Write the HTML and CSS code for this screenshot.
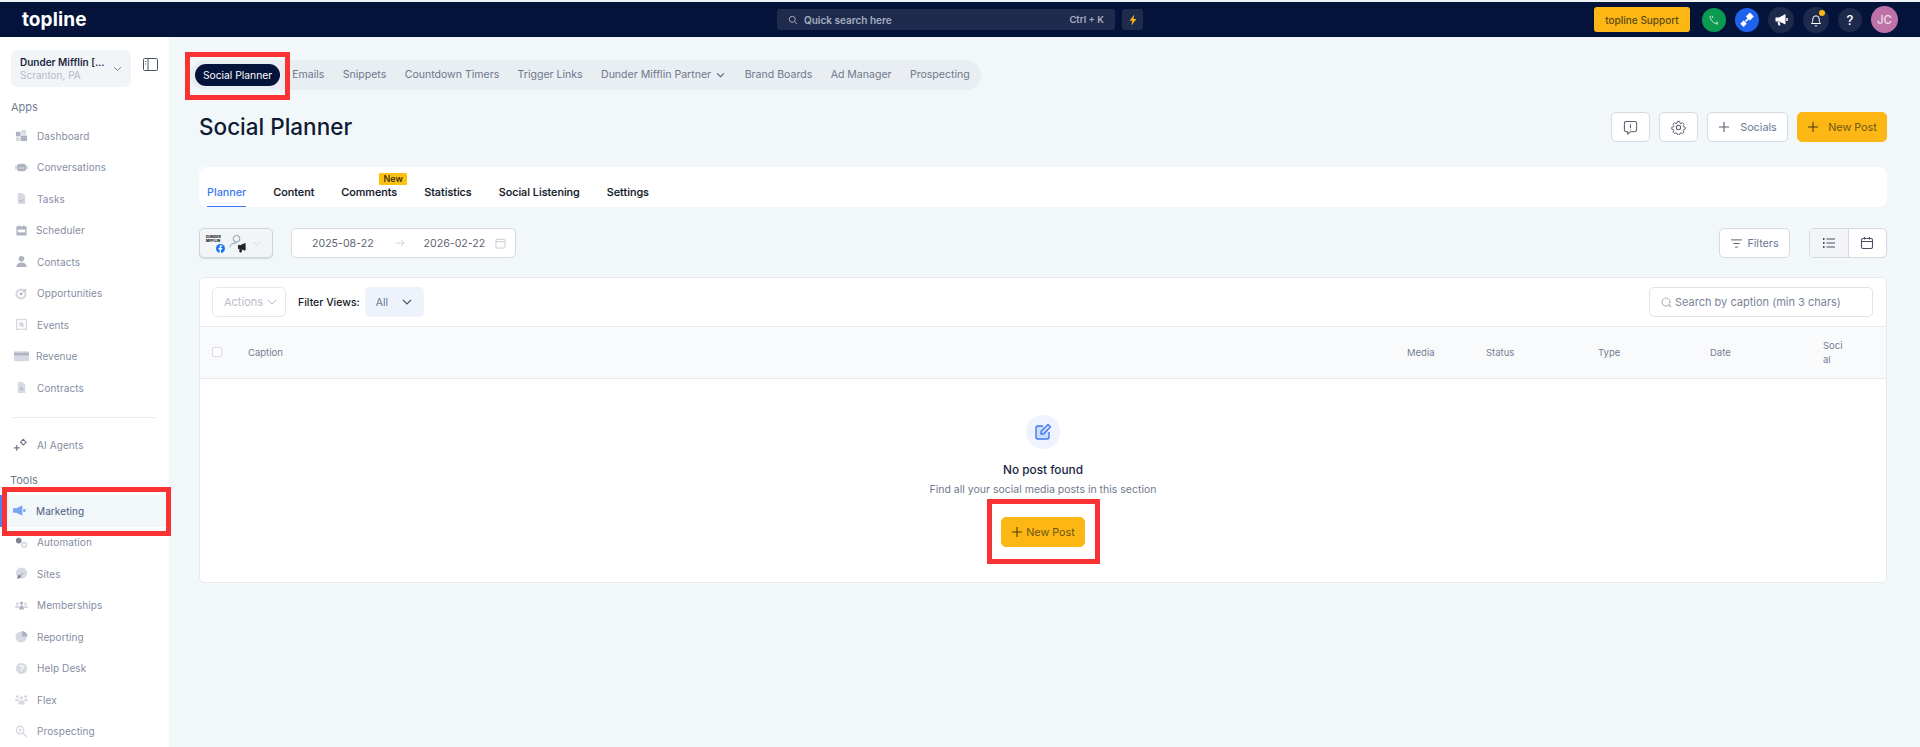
FILE: index.html
```html
<!DOCTYPE html>
<html lang="en">
<head>
<meta charset="utf-8">
<title>Social Planner</title>
<link rel="stylesheet" href="styles.css">
</head>
<body>
<div class="topstrip"></div>
<header class="topbar">
  <div class="logo">topline</div>
  <div class="top-center">
    <div class="quick">
      <svg class="qi" viewBox="0 0 14 14"><circle cx="6" cy="6" r="4.2"/><path d="M9.2 9.2 12.5 12.5"/></svg>
      <span class="quick-text">Quick search here</span>
      <span class="quick-key">Ctrl + K</span>
    </div>
    <div class="bolt"><svg viewBox="0 0 12 14"><path d="M7.5 0.5 2 8h3.2L4 13.5 10 5.8H6.6z"/></svg></div>
  </div>
  <div class="top-right">
    <button class="support">topline Support</button>
    <span class="circle green"><svg viewBox="0 0 14 14"><path d="M3 3c0 4 4 8 8 8" /><path d="M5 2.8 6 5M9 9l2.2 1"/></svg></span>
    <span class="circle blue"><svg viewBox="0 0 14 14"><path class="fillw" d="M9.5 .5 13 4 9.500 7.500 6 4z"/><path class="fillw" d="M4 7.500 6.800 10.300 4 13.100 1.200 10.300z"/><path d="M5.500 8.500 8.500 5.500" stroke-width="1.500"/></svg></span>
    <span class="circle navy big"><svg viewBox="0 0 14 14"><path class="fillw" d="M1.500 4.500h3.500l6.500-3.500v10.500L5 8.500H1.500z"/><path class="fillw" d="M3.500 9h2.200l.7 3.500H4.500z"/><rect class="fillw" x="12.300" y="5" width="1.500" height="3"/></svg></span>
    <span class="circle navy big bell"><svg viewBox="0 0 14 14"><path d="M2.500 10.500c1-1 1.300-2.200 1.300-4.500a3.200 3.200 0 0 1 6.400 0c0 2.300.3 3.500 1.300 4.500z"/><path d="M5.800 12.800h2.400"/></svg><i class="dot"></i></span>
    <span class="circle navy help">?</span>
    <span class="avatar">JC</span>
  </div>
</header>

<div class="shell">
  <aside class="sidebar">
    <div class="loc-row">
      <div class="loc">
        <div class="loc-text">
          <div class="loc-name">Dunder Mifflin [...</div>
          <div class="loc-sub">Scranton, PA</div>
        </div>
        <svg class="chev" viewBox="0 0 12 8"><path d="M1.500 1.500 6 6l4.500-4.500"/></svg>
      </div>
      <svg class="panel-ico" viewBox="0 0 15 13"><rect x="0.5" y="0.5" width="14" height="12" rx="1"/><path d="M5 .5v12M2.500 3v1M2.500 5.500v1"/></svg>
    </div>
    <div class="sec">Apps</div>
    <a class="item"><svg viewBox="0 0 14 14"><rect x="1" y="3" width="5" height="5"/><rect class="lt" x="7" y="1" width="5" height="5"/><rect class="lt" x="1" y="9" width="4" height="4"/><rect x="6" y="7" width="7" height="6"/></svg><span>Dashboard</span></a>
    <a class="item"><svg viewBox="0 0 14 14"><rect x="2" y="3" width="10" height="8" rx="3"/><rect class="lt" x="0" y="5" width="2" height="4"/><rect class="lt" x="12" y="5" width="2" height="4"/><path class="whl" d="M4.500 7.500h1M6.500 7.500h1M8.500 7.500h1"/></svg><span>Conversations</span></a>
    <a class="item"><svg viewBox="0 0 14 14"><path class="lt" d="M3 1h5l3 3v9H3z"/><path class="ln" d="M5 9l1.500 1.500L9 8"/></svg><span>Tasks</span></a>
    <a class="item tight"><svg viewBox="0 0 14 14"><rect x="1.500" y="2.500" width="11" height="10" rx="1"/><rect class="wh" x="3" y="6" width="8" height="3"/><rect x="4" y="1" width="1" height="2"/><rect x="9" y="1" width="1" height="2"/></svg><span>Scheduler</span></a>
    <a class="item"><svg viewBox="0 0 14 14"><circle cx="7" cy="4" r="3"/><path d="M1.500 13c0-3 2-5 5.500-5s5.500 2 5.500 5z"/></svg><span>Contacts</span></a>
    <a class="item"><svg viewBox="0 0 14 14"><circle class="lt" cx="6.500" cy="7.500" r="6"/><circle class="wh" cx="6.500" cy="7.500" r="3.500"/><circle cx="6.500" cy="7.500" r="1.500"/><path d="M7 7 11 2l1.500 1z"/></svg><span>Opportunities</span></a>
    <a class="item"><svg viewBox="0 0 14 14"><rect class="lt" x="1" y="1" width="12" height="12"/><rect class="wh" x="2.500" y="2.500" width="9" height="9"/><rect class="lt" x="4.500" y="4.500" width="4" height="4"/><rect class="lt" x="6" y="6" width="3.500" height="3.500"/></svg><span>Events</span></a>
    <a class="item tight wide"><svg viewBox="0 0 14 10"><rect x="0" y="0" width="14" height="9.500" rx="1" class="lt"/><rect x="0" y="1.500" width="14" height="2.500"/></svg><span>Revenue</span></a>
    <a class="item"><svg viewBox="0 0 14 14"><path class="lt" d="M3 1h5l3 3v9H3z"/><path class="ln" d="M5 10c1-1 2-2 2-3 0 1 1 3 2 3"/></svg><span>Contracts</span></a>
    <div class="divider"></div>
    <a class="item ai"><svg viewBox="0 0 16 14"><path class="dk" d="M4 7v6M1 10h6"/><path class="dk" d="M11 1l3 3-3 3-3-3z" fill="none"/></svg><span>AI Agents</span></a>
    <div class="sec tools">Tools</div>
    <a class="item active"><svg viewBox="0 0 14 14"><path d="M0 4.500h3.500L10 1.500v11L3.500 9.500H0z"/><rect x="11" y="5.500" width="2.500" height="3"/></svg><span>Marketing</span></a>
    <a class="item"><svg viewBox="0 0 14 14"><circle class="dkf" cx="4" cy="5" r="3"/><circle class="lt" cx="10" cy="9.500" r="3.500"/><circle class="wh" cx="10" cy="9.500" r="1.500"/></svg><span>Automation</span></a>
    <a class="item"><svg viewBox="0 0 14 14"><circle class="lt" cx="7" cy="6.500" r="6"/><path class="dkf" d="M2 13l2-5 3 3zM5 9.500 8 6.500l.5.5-3 3z"/></svg><span>Sites</span></a>
    <a class="item"><svg viewBox="0 0 16 14"><circle class="lt" cx="3" cy="5" r="1.800"/><circle cx="8" cy="4" r="2"/><circle class="lt" cx="13" cy="5" r="1.800"/><path class="lt" d="M0 10c0-2 1-3 3-3s2 1 2 3z"/><path d="M5 12c0-3 1-5 3-5s3 2 3 5z"/><path class="lt" d="M11 10c0-2 1-3 2-3s3 1 3 3z"/></svg><span>Memberships</span></a>
    <a class="item"><svg viewBox="0 0 14 14"><circle class="lt" cx="6.500" cy="7.500" r="6"/><path d="M7.500 1a6 6 0 0 1 6 6h-6z"/></svg><span>Reporting</span></a>
    <a class="item"><svg viewBox="0 0 14 14"><circle class="lt" cx="7" cy="7" r="6"/><path class="whl" d="M5.200 5.500a1.800 1.800 0 1 1 2.700 1.600c-.6.4-.9.700-.9 1.400M7 10v.8"/></svg><span>Help Desk</span></a>
    <a class="item"><svg viewBox="0 0 16 14"><circle class="lt" cx="3" cy="3.500" r="1.800"/><circle class="lt" cx="8" cy="5" r="2"/><circle class="lt" cx="13" cy="3.500" r="1.800"/><path class="lt" d="M0 9c0-2 1-3 3-3s2 1 2 3zM11 9c0-2 1-3 2-3s3 1 3 3zM4 13c0-3 1-5 4-5s4 2 4 5z"/></svg><span>Flex</span></a>
    <a class="item"><svg viewBox="0 0 14 14"><circle class="ol" cx="5.500" cy="5.500" r="4"/><circle class="lt" cx="5.500" cy="5.500" r="1.500"/><path class="ol" d="M8.500 8.500 13 13"/></svg><span>Prospecting</span></a>
  </aside>

  <main class="main">
    <nav class="pills">
      <a class="pill on">Social Planner</a>
      <a class="pill">Emails</a>
      <a class="pill">Snippets</a>
      <a class="pill">Countdown Timers</a>
      <a class="pill">Trigger Links</a>
      <a class="pill dd">Dunder Mifflin Partner <svg class="pill-chev" viewBox="0 0 10 7"><path d="M1 1.500 5 5.500l4-4"/></svg></a>
      <a class="pill">Brand Boards</a>
      <a class="pill">Ad Manager</a>
      <a class="pill">Prospecting</a>
    </nav>

    <div class="title-row">
      <h1>Social Planner</h1>
      <div class="actions">
        <button class="btn square"><svg viewBox="0 0 16 16"><path d="M3.500 1.500h9a2 2 0 0 1 2 2v7a2 2 0 0 1-2 2H8l-3 2.500v-2.500H3.500a2 2 0 0 1-2-2v-7a2 2 0 0 1 2-2z"/><path d="M8 4.500v4M8 10v.8"/></svg></button>
        <button class="btn square"><svg viewBox="0 0 16 16"><circle cx="8" cy="8" r="2.300"/><path d="M6.700 1h2.600l.4 2 1.300.6 1.800-1.100 1.800 1.900-1.100 1.700.5 1.300 2 .4v2.400l-2 .4-.5 1.300 1.100 1.700-1.800 1.900-1.800-1.100-1.300.6-.4 2H6.700l-.4-2-1.300-.6-1.800 1.100-1.800-1.900 1.100-1.700-.5-1.300-2-.4V7.800l2-.4.5-1.300-1.100-1.700 1.800-1.900 1.800 1.100 1.300-.6z" transform="translate(.8 .6) scale(.9)"/></svg></button>
        <button class="btn socials"><svg viewBox="0 0 12 12"><path d="M6 1v10M1 6h10"/></svg><span>Socials</span></button>
        <button class="btn primary"><svg viewBox="0 0 12 12"><path d="M6 1v10M1 6h10"/></svg><span>New Post</span></button>
      </div>
    </div>

    <div class="tabs">
      <a class="tab on">Planner</a>
      <a class="tab">Content</a>
      <a class="tab">Comments<em class="badge">New</em></a>
      <a class="tab">Statistics</a>
      <a class="tab">Social Listening</a>
      <a class="tab">Settings</a>
    </div>

    <div class="filter-row">
      <div class="acct">
        <span class="acct-logo"><b class="mini">DUNDER MIFFLIN</b><svg class="fb" viewBox="0 0 10 10"><circle cx="5" cy="5" r="5"/><path d="M5.500 10V6h1.300l.2-1.500H5.500v-1c0-.5.200-.8.800-.8H7V1.400C6.700 1.300 6.300 1.300 6 1.300 4.800 1.300 4 2 4 3.300v1.200H2.800V6H4v4z"/></svg></span>
        <svg class="acct-user" viewBox="0 0 20 20"><circle cx="9" cy="5" r="3.500"/><path d="M2 14c0-3 3-4.500 7-4.500"/><path class="blk" d="M11 12h2.500L18 10v7l-4.500-1.500H11zM12.500 16h1.500v3h-1.500z"/></svg>
        <svg class="acct-chev" viewBox="0 0 10 6"><path d="M1 1l4 4 4-4"/></svg>
      </div>
      <div class="dates">
        <span>2025-08-22</span>
        <svg class="arrow" viewBox="0 0 12 10"><path d="M1 5h10M7 1l4 4-4 4"/></svg>
        <span>2026-02-22</span>
        <svg class="cal" viewBox="0 0 12 12"><rect x="1" y="1.500" width="10" height="9.500" rx="1.500"/><path d="M1 4h10"/></svg>
      </div>
      <div class="spacer"></div>
      <button class="btn filters"><svg viewBox="0 0 14 10"><path d="M1 1h12M3.500 5h7M5.500 9h3"/></svg><span>Filters</span></button>
      <div class="toggle">
        <span class="tg on"><svg viewBox="0 0 14 12"><path d="M4.500 2H13M4.500 6H13M4.500 10H13"/><path class="dots" d="M1 2h1.500M1 6h1.500M1 10h1.500"/></svg></span>
        <span class="tg"><svg viewBox="0 0 14 14"><rect x="1.500" y="2.500" width="11" height="10" rx="1.500"/><path d="M1.500 5.500h11M4.500 1v2.500M9.500 1v2.500"/></svg></span>
      </div>
    </div>

    <section class="card">
      <div class="toolbar">
        <div class="actions-sel"><span>Actions</span><svg viewBox="0 0 10 6"><path d="M1 1l4 4 4-4"/></svg></div>
        <span class="fv">Filter Views:</span>
        <div class="all"><span>All</span><svg viewBox="0 0 10 6"><path d="M1 1l4 4 4-4"/></svg></div>
        <div class="spacer"></div>
        <div class="search"><svg viewBox="0 0 12 12"><circle cx="5.500" cy="5.500" r="4.300" stroke-dasharray="1.500 .8"/><path d="M8.800 8.800 11 11"/></svg><span>Search by caption (min 3 chars)</span></div>
      </div>
      <div class="thead">
        <span class="check"></span>
        <span>Caption</span>
        <span>Media</span>
        <span>Status</span>
        <span>Type</span>
        <span>Date</span>
        <span class="social">Social</span>
      </div>
      <div class="empty">
        <span class="empty-ico"><svg viewBox="0 0 18 18"><path d="M9 3H4a2 2 0 0 0-2 2v9a2 2 0 0 0 2 2h9a2 2 0 0 0 2-2V9"/><path d="M7 11v-2.500L14 1.500l2.500 2.500L9.500 11z"/></svg></span>
        <div class="empty-title">No post found</div>
        <div class="empty-sub">Find all your social media posts in this section</div>
        <button class="btn primary small"><svg viewBox="0 0 12 12"><path d="M6 1v10M1 6h10"/></svg><span>New Post</span></button>
      </div>
    </section>
  </main>
</div>

<div class="mark mark-tab"></div>
<div class="mark mark-side"></div>
<div class="mark mark-new"></div>
</body>
</html>
```
FILE: styles.css
```css
* { box-sizing: border-box; }
html, body { margin: 0; height: 747px; overflow: hidden; }
body { font-family: Inter, "Liberation Sans", sans-serif; background: #f2f7fa; color: #101828; position: relative; }
button { font-family: inherit; cursor: pointer; }
h1 { margin: 0; }
svg { display: block; flex: none; }

.topstrip { height: 2px; background: #eef1f5; }
.topbar { height: 35px; background: #04133a; display: flex; align-items: center; position: relative; }
.logo { color: #fff; font-weight: 700; font-size: 19px; letter-spacing: .1px; margin-left: 22px; width: 755px; line-height: 1; }
.top-center { display: flex; gap: 7px; align-items: center; }
.quick { width: 338px; height: 21px; background: #1f2b4d; border-radius: 3px; display: flex; align-items: center; padding: 0 11px; color: #a5adc0; font-size: 10px; font-weight: 600; }
.qi { width: 10px; height: 10px; fill: none; stroke: #b6bccb; stroke-width: 1.2; margin-right: 6px; }
.quick-key { margin-left: auto; font-size: 9.500px; }
.bolt { width: 21px; height: 21px; background: #1f2b4d; border-radius: 3px; display: flex; align-items: center; justify-content: center; }
.bolt svg { width: 10px; height: 12px; fill: #fbb615; }
.top-right { margin-left: auto; display: flex; align-items: center; padding-right: 22px; }
.support { width: 96px; height: 25px; border: 0; background: #fdb714; border-radius: 3px; color: #5b4a1a; font-size: 10px; font-weight: 500; margin-right: 12px; padding: 0; }
.circle { width: 24px; height: 24px; border-radius: 50%; display: flex; align-items: center; justify-content: center; margin-right: 9px; position: relative; }
.circle svg { width: 14px; height: 14px; fill: none; stroke: #fff; stroke-width: 1; }
.circle svg .fillw { fill: #fff; stroke: none; }
.green { background: #0a9b50; }
.green svg { stroke: #c7eed8; }
.blue { background: #1e62ee; }
.blue svg { width: 16px; height: 16px; }
.navy { background: #1e2a4c; }
.navy.big { width: 26px; height: 26px; }
.help { color: #fff; font-size: 13px; font-weight: 500; }
.dot { position: absolute; width: 6px; height: 6px; border-radius: 50%; background: #fdb714; right: 4px; top: 3px; }
.avatar { width: 27px; height: 27px; border-radius: 50%; background: #bd72a8; color: #eedfe9; font-size: 11.500px; font-weight: 500; display: flex; align-items: center; justify-content: center; }

.shell { display: flex; height: 710px; }
.sidebar { width: 169px; flex: none; background: #fff; padding-top: 13px; overflow: hidden; }
.loc-row { display: flex; align-items: center; padding-left: 11px; }
.loc { width: 120px; height: 37px; background: #f2f5f8; border-radius: 6px; display: flex; align-items: center; padding-left: 9px; padding-right: 9px; }
.loc-text { flex: 1; min-width: 0; }
.loc-name { font-size: 10px; font-weight: 600; color: #1b2540; line-height: 12.500px; white-space: nowrap; }
.loc-sub { font-size: 10px; color: #b4bac6; line-height: 12.500px; }
.chev { width: 9px; height: 6px; fill: none; stroke: #6c7488; stroke-width: 1.200; }
.panel-ico { width: 15px; height: 13px; margin-left: 12px; fill: none; stroke: #4a5266; stroke-width: 1; margin-top: -8px; }
.sec { font-size: 11px; color: #737c92; padding-left: 11px; margin-top: 12px; line-height: 16px; height: 16px; }
.sec.tools { padding-left: 10px; margin-top: 11px; height: 16px; margin-bottom: 0; }
.item { display: flex; align-items: center; height: 31.500px; padding-left: 15px; font-size: 10px; color: #858da3; gap: 9px; letter-spacing: .1px; }
.sec + .item { margin-top: 5px; }
.item svg { width: 13px; height: 13px; fill: #aeb3c1; }
.item svg .lt { fill: #d6d9e1; }
.item svg .wh { fill: #fff; }
.item svg .ln { fill: none; stroke: #9aa1b2; stroke-width: 1; }
.item svg .dk { stroke: #6e7487; stroke-width: 1.200; fill: none; }
.item svg .dkf { fill: #7d8394; }
.item svg .whl { fill: none; stroke: #fff; stroke-width: 1.200; }
.item svg .ol { fill: none; stroke: #d0d3dc; stroke-width: 1.200; }
.item.tight { gap: 8px; }
.item.wide { padding-left: 14px; gap: 7px; }
.item.wide svg { width: 15px; height: 11px; }
.divider { height: 1px; background: #e8eaee; margin: 13px 13px 12px 12px; }
.item.ai { gap: 9px; padding-left: 13px; }
.item.ai svg { width: 15px; height: 14px; }
.item.active { background: #f2f7fa; color: #4c5a7e; box-shadow: inset 2px 0 0 #4c83f1; padding-left: 13px; gap: 10px; }
.item.active svg { fill: #79a3f5; }
.sec.tools + .item { margin-top: 7px; }

.main { flex: 1; min-width: 0; padding: 23px 33px 0 30px; }
.pills { display: inline-flex; height: 30px; align-items: center; background: #e9eef3; border-radius: 15px; margin-left: -9px; padding: 0 2px 0 5px; }
.pill { font-size: 10.550px; color: #70778a; padding: 0 9.200px; white-space: nowrap; display: flex; align-items: center; gap: 5px; line-height: 22px; }
.pill.dd { padding-right: 10.500px; }
.pill.on { background: #04133a; color: #fff; border-radius: 11px; width: 85px; justify-content: center; padding: 0; margin-right: 3px; font-size: 10.300px; }
.pill-chev { width: 9px; height: 6px; fill: none; stroke: #5b6378; stroke-width: 1.300; }

.title-row { display: flex; justify-content: space-between; align-items: center; height: 30px; margin-top: 22px; }
h1 { font-size: 22.500px; font-weight: 500; color: #0f1a33; line-height: 30px; letter-spacing: 0; margin-top: -1px; }
.actions { display: flex; gap: 9px; }
.btn { height: 30px; border: 1px solid #d5dae2; background: #fff; border-radius: 5px; display: flex; align-items: center; justify-content: center; padding: 0; color: #6a7797; font-size: 10.800px; }
.btn svg { fill: none; stroke: #5a5f6d; stroke-width: 1.100; }
.square { width: 39px; }
.square svg { width: 15px; height: 15px; }
.socials { width: 81px; gap: 10px; }
.socials svg, .primary svg { width: 12px; height: 12px; }
.primary { width: 90px; background: #fdb714; border-color: #fdb714; color: #6e5614; gap: 9px; }
.primary svg { stroke: #4c3c10; }
.primary.small { width: 84px; gap: 3px; margin-top: 19px; height: 30px; border-radius: 5px; font-size: 10.800px; }

.tabs { margin-top: 25px; height: 40px; background: #fff; border-radius: 8px; display: flex; padding-left: 8px; gap: 27px; }
.tab { font-size: 10.800px; font-weight: 500; color: #101828; height: 40px; line-height: 51px; position: relative; white-space: nowrap; -webkit-text-stroke: .15px #101828; }
.tab.on { color: #3b76f6; box-shadow: inset 0 -1px 0 #3b76f6; -webkit-text-stroke: 0; }
.badge { position: absolute; top: 6px; right: -10px; width: 28px; height: 12px; background: #fcc010; color: #2c2306; font-size: 9px; font-weight: 500; font-style: normal; line-height: 12px; text-align: center; border-radius: 1px; -webkit-text-stroke: 0; }

.filter-row { margin-top: 21px; display: flex; align-items: center; height: 30px; }
.spacer { flex: 1; }
.acct { width: 74px; height: 30px; border: 1px solid #cfd4dc; background: #f2f5f8; border-radius: 5px; display: flex; align-items: center; padding-left: 6px; position: relative; box-shadow: 0 1px 1px #d8dce2; }
.acct-logo { position: relative; width: 20px; height: 20px; display: block; }
.mini { font-size: 3.500px; line-height: 3.500px; display: block; width: 14px; font-weight: 800; color: #222; margin-top: 3px; }
.fb { position: absolute; width: 9px; height: 9px; left: 10px; top: 11px; fill: #1877f2; }
.fb path { fill: #fff; }
.acct-user { width: 19px; height: 19px; fill: none; stroke: #8b92a3; stroke-width: 1; margin-left: 2px; }
.acct-user .blk { fill: #222; stroke: #222; }
.acct-chev { width: 8px; height: 5px; fill: none; stroke: #d0d4dc; stroke-width: 1; margin-left: 6px; }
.dates { width: 225px; height: 30px; margin-left: 18px; border: 1px solid #d5dae2; background: #fff; border-radius: 5px; display: flex; align-items: center; padding-left: 20px; font-size: 10.600px; color: #5f6473; }
.arrow { width: 10px; height: 8px; fill: none; stroke: #c5c9d2; stroke-width: 1; margin: 0 19px 0 21px; }
.cal { width: 11px; height: 11px; fill: none; stroke: #c5c9d2; stroke-width: 1; margin-left: 10px; }
.filters { width: 71px; gap: 4px; }
.filters svg { width: 13px; height: 9px; }
.toggle { width: 78px; height: 30px; border: 1px solid #d5dae2; border-radius: 5px; margin-left: 19px; display: flex; overflow: hidden; background: #fff; }
.tg { flex: 1; display: flex; align-items: center; justify-content: center; }
.tg.on { background: #f2f4f7; border-right: 1px solid #d5dae2; }
.tg svg { width: 14px; height: 14px; fill: none; stroke: #4a5060; stroke-width: 1.100; }
.tg .dots { stroke-width: 2; }

.card { margin-top: 19px; background: #fff; border: 1px solid #e7ebf0; border-radius: 5px; height: 306px; }
.toolbar { height: 49px; display: flex; align-items: center; padding: 0 12px; border-bottom: 1px solid #e7eaee; }
.actions-sel { width: 74px; height: 30px; border: 1px solid #e6e8ec; border-radius: 5px; display: flex; align-items: center; padding-left: 11px; gap: 4px; color: #b9bec9; font-size: 11px; }
.actions-sel svg { width: 10px; height: 6px; fill: none; stroke: #b0b5c1; stroke-width: 1; }
.fv { margin-left: 12px; font-size: 10.500px; font-weight: 500; color: #111827; }
.all { margin-left: 5px; width: 59px; height: 30px; border-radius: 5px; background: #eef2fb; display: flex; align-items: center; padding-left: 11px; gap: 14px; color: #6b7899; font-size: 10.500px; }
.all svg { width: 10px; height: 6px; fill: none; stroke: #4a5060; stroke-width: 1.100; }
.search { width: 224px; height: 30px; border: 1px solid #dfe3e9; border-radius: 5px; display: flex; align-items: center; padding-left: 11px; gap: 3px; color: #7a8399; font-size: 11px; margin-right: 1px; }
.search svg { width: 11px; height: 11px; fill: none; stroke: #6f7686; stroke-width: 1; }
.thead { height: 52px; background: #f9fafb; border-bottom: 1px solid #e7eaee; display: grid; grid-template-columns: 36px 1159px 79px 112px 112px 113px 22px; align-items: center; padding-left: 12px; font-size: 9.500px; color: #757d92; line-height: 13.500px; }
.check { width: 10px; height: 10px; border: 1px solid #d9dce2; border-radius: 2px; background: #fff; margin-top: -1px; }
.social { word-break: break-all; }
.empty { display: flex; flex-direction: column; align-items: center; padding-top: 36px; }
.empty-ico { width: 34px; height: 34px; border-radius: 50%; background: #eef3fd; display: flex; align-items: center; justify-content: center; }
.empty-ico svg { width: 18px; height: 18px; fill: #cfdcfb; stroke: #3f79f3; stroke-width: 1.400; stroke-linejoin: round; }
.empty-title { margin-top: 13px; font-size: 11.800px; font-weight: 500; color: #1b2540; line-height: 16px; }
.empty-sub { margin-top: 4px; font-size: 10.500px; color: #6f788d; line-height: 16px; }

.mark { position: absolute; border: 5px solid #f93333; pointer-events: none; }
.mark-tab { left: 185px; top: 52px; width: 105px; height: 48px; }
.mark-side { left: 2px; top: 487px; width: 169px; height: 49px; }
.mark-new { left: 987px; top: 499px; width: 113px; height: 65px; }
```
